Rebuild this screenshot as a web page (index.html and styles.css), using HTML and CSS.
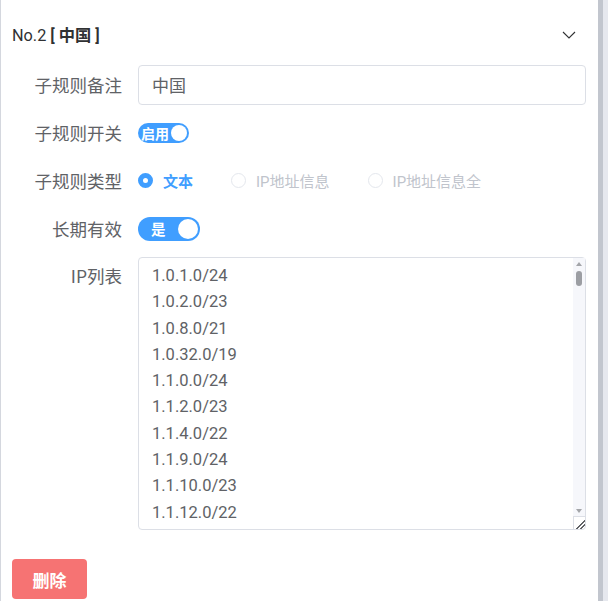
FILE: index.html
```html
<!DOCTYPE html>
<html lang="zh">
<head>
<meta charset="utf-8">
<link rel="stylesheet" href="styles.css">
</head>
<body>
<div class="page">
  <div class="panel">
    <div class="head">
      <div class="title">No.2 <b>[ 中国 ]</b></div>
      <svg class="chev" width="14" height="8" viewBox="0 0 14 8"><path d="M1 1 L7 7 L13 1" fill="none" stroke="#303133" stroke-width="1.1"/></svg>
    </div>
    <div class="form">
      <div class="row">
        <div class="label">子规则备注</div>
        <div class="ctrl"><div class="input">中国</div></div>
      </div>
      <div class="row">
        <div class="label">子规则开关</div>
        <div class="ctrl"><span class="sw sw-sm"><span class="sw-text">启用</span><span class="knob"></span></span></div>
      </div>
      <div class="row">
        <div class="label">子规则类型</div>
        <div class="ctrl radios">
          <span class="radio on"><span class="dot"></span><span class="rl">文本</span></span>
          <span class="radio"><span class="dot"></span><span class="rl">IP地址信息</span></span>
          <span class="radio"><span class="dot"></span><span class="rl">IP地址信息全</span></span>
        </div>
      </div>
      <div class="row">
        <div class="label">长期有效</div>
        <div class="ctrl"><span class="sw sw-lg"><span class="sw-text">是</span><span class="knob"></span></span></div>
      </div>
      <div class="row row-ta">
        <div class="label">IP列表</div>
        <div class="ctrl">
          <div class="ta-wrap">
<textarea class="ta" spellcheck="false">1.0.1.0/24
1.0.2.0/23
1.0.8.0/21
1.0.32.0/19
1.1.0.0/24
1.1.2.0/23
1.1.4.0/22
1.1.9.0/24
1.1.10.0/23
1.1.12.0/22
1.1.16.0/20
1.1.32.0/19
1.2.0.0/23
1.2.2.0/24
1.2.4.0/24
1.2.5.0/24
1.2.6.0/23
1.2.8.0/24
1.2.9.0/24
1.2.10.0/23
1.2.12.0/22
1.2.16.0/20
1.2.32.0/19
1.2.64.0/18
1.3.0.0/16
1.4.1.0/24
1.4.2.0/23
1.4.4.0/24
1.4.5.0/24
1.4.6.0/23
1.4.8.0/21
1.4.16.0/20
1.4.32.0/19
1.4.64.0/18
1.8.0.0/16
1.10.0.0/21
1.10.8.0/23
1.10.11.0/24
1.10.12.0/22
1.10.16.0/20
1.10.32.0/19
1.10.64.0/18
1.12.0.0/14
1.24.0.0/13
1.45.0.0/16
1.48.0.0/15
1.50.0.0/16
1.51.0.0/16
1.56.0.0/13
1.68.0.0/14
1.80.0.0/13
1.88.0.0/14
1.92.0.0/15
1.94.0.0/15
1.180.0.0/14
1.184.0.0/15
1.188.0.0/14
1.192.0.0/13
1.202.0.0/15
1.204.0.0/14
14.0.0.0/21
14.0.12.0/22
14.1.0.0/22
14.1.24.0/22
14.1.96.0/22
14.1.108.0/22
14.16.0.0/12
14.102.128.0/22
14.102.156.0/22
14.102.180.0/22
14.103.0.0/16
14.104.0.0/13
14.112.0.0/12
14.130.0.0/15
14.134.0.0/15
14.144.0.0/12
14.192.60.0/22
14.192.76.0/22
14.196.0.0/15
14.204.0.0/15
14.208.0.0/12
27.0.128.0/22
27.0.132.0/22
27.0.160.0/22
27.0.188.0/22
27.0.204.0/22
27.0.208.0/21
27.8.0.0/13
27.16.0.0/12
27.34.232.0/21
27.36.0.0/14
27.40.0.0/13
27.50.40.0/21
27.50.128.0/17
27.54.72.0/21
27.54.152.0/21
27.54.192.0/18
27.98.208.0/20
27.98.224.0/19
27.99.128.0/17
27.103.0.0/16
27.106.128.0/18
27.106.204.0/22
27.109.32.0/19
27.112.0.0/18
27.112.80.0/20
27.113.128.0/18
27.115.0.0/17
27.116.44.0/22
27.121.72.0/21
27.121.120.0/21
27.128.0.0/15
27.131.220.0/22
27.144.0.0/16
27.148.0.0/14
27.152.0.0/13
27.184.0.0/13
27.192.0.0/11
27.224.0.0/14
36.0.0.0/22
36.0.8.0/21
36.0.16.0/20
36.0.32.0/19
36.0.64.0/18
36.0.128.0/17
36.1.0.0/16
36.4.0.0/14
36.16.0.0/12
36.32.0.0/14
36.36.0.0/16
36.37.0.0/19
36.37.36.0/23
36.37.39.0/24
36.37.40.0/21
36.37.48.0/20
36.40.0.0/13
36.48.0.0/15
36.51.0.0/16
36.56.0.0/13
36.96.0.0/11
36.128.0.0/10
36.192.0.0/11
36.248.0.0/14</textarea>
            <div class="sb" aria-hidden="true">
              <span class="sb-up"></span>
              <span class="sb-thumb"></span>
              <span class="sb-down"></span>
            </div>
            <div class="grip" aria-hidden="true"></div>
          </div>
        </div>
      </div>
      <div class="actions"><span class="btn-del">删除</span></div>
    </div>
  </div>
  <div class="strip-dark"></div>
  <div class="strip-light"></div>
</div>
</body>
</html>
```
FILE: styles.css
```css
html, body {
  margin: 0;
  padding: 0;
  background: #fff;
}
body {
  font-family: Roboto, "Noto Sans CJK SC", sans-serif;
  color: #606266;
}
.page {
  display: flex;
  width: 608px;
  height: 601px;
  overflow: hidden;
}
.panel {
  flex: 1;
  border-left: 1px solid #d4d7de;
  display: flex;
  flex-direction: column;
  min-width: 0;
}
.strip-dark {
  width: 5px;
  background: #c2c6ce;
}
.strip-light {
  width: 5px;
  background: #e6e8ee;
}
.head {
  height: 62px;
  padding-top: 3px;
  padding-left: 11px;
  padding-right: 22px;
  display: flex;
  align-items: center;
  justify-content: space-between;
}
.title {
  font-size: 16.25px;
  color: #303133;
}
.title b {
  font-weight: 600;
}
.chev {
  display: block;
  margin-top: 2px;
}
.form {
  display: flex;
  flex-direction: column;
  gap: 8px;
  padding-right: 12px;
}
.row {
  display: grid;
  grid-template-columns: 121px 1fr;
  column-gap: 16px;
  min-height: 40px;
}
.label {
  text-align: right;
  font-size: 17.5px;
  line-height: 40px;
  height: 40px;
  color: #606266;
  font-family: "Noto Sans CJK SC", Roboto, sans-serif;
  white-space: nowrap;
}
.row-ta .label {
  line-height: 38px;
}
.ctrl {
  box-sizing: border-box;
  display: flex;
  align-items: center;
  min-height: 40px;
}
.input {
  box-sizing: border-box;
  width: 100%;
  height: 40px;
  border: 1px solid #dcdfe6;
  border-radius: 4px;
  padding: 0 13px;
  line-height: 38px;
  font-size: 17px;
  color: #606266;
  font-family: "Noto Sans CJK SC", Roboto, sans-serif;
}
.sw {
  position: relative;
  display: inline-flex;
  align-items: center;
  background: #409eff;
  border-radius: 12px;
  color: #fff;
  font-family: "Noto Sans CJK SC", sans-serif;
  font-weight: 700;
  box-sizing: border-box;
}
.sw-sm {
  width: 51px;
  height: 20px;
  font-size: 14px;
  padding-left: 3px;
}
.sw-sm .knob {
  position: absolute;
  right: 2px;
  top: 2px;
  width: 16px;
  height: 16px;
}
.sw-lg {
  width: 62px;
  height: 24px;
  font-size: 14.5px;
  padding-left: 13px;
}
.sw-lg .knob {
  position: absolute;
  right: 2px;
  top: 2px;
  width: 20px;
  height: 20px;
}
.knob {
  background: #fff;
  border-radius: 50%;
}
.sw-text {
  line-height: 1;
}
.radios {
  padding-bottom: 2px;
}
.radio {
  display: inline-flex;
  align-items: center;
  font-size: 15px;
  color: #c0c4cc;
  font-family: Roboto, "Noto Sans CJK SC", sans-serif;
}
.radio + .radio {
  margin-left: 38px;
}
.dot {
  box-sizing: border-box;
  width: 15px;
  height: 15px;
  border-radius: 50%;
  border: 1px solid #e4e7ed;
  background: #fff;
  margin-right: 10px;
}
.radio.on .dot {
  border: 5px solid #409eff;
}
.radio.on .rl {
  color: #409eff;
  font-weight: 700;
  font-family: "Noto Sans CJK SC", sans-serif;
}
.row-ta .ctrl {
  align-items: flex-start;
}
.ta-wrap {
  position: relative;
  width: 100%;
}
.ta {
  display: block;
  box-sizing: border-box;
  width: 100%;
  height: 273px;
  margin: 0;
  border: 1px solid #dcdfe6;
  border-radius: 4px;
  padding: 5px 26px 4px 13px;
  font-family: Roboto, "Noto Sans CJK SC", sans-serif;
  font-size: 16.5px;
  line-height: 26.3px;
  color: #606266;
  resize: none;
  outline: none;
  overflow: hidden;
}
.sb {
  position: absolute;
  top: 1px;
  right: 1px;
  bottom: 14px;
  width: 12px;
  background: #f6f7fb;
}
.sb-up, .sb-down {
  position: absolute;
  left: 3px;
  width: 0;
  height: 0;
  border-left: 3px solid transparent;
  border-right: 3px solid transparent;
}
.sb-up {
  top: 4px;
  border-bottom: 4px solid #a3a5a9;
}
.sb-down {
  bottom: 3px;
  border-top: 4px solid #a3a5a9;
}
.sb-thumb {
  position: absolute;
  top: 13px;
  left: 3px;
  width: 6px;
  height: 15px;
  border-radius: 3px;
  background: #9c9ea3;
}
.grip {
  position: absolute;
  right: 1px;
  bottom: 1px;
  width: 12px;
  height: 13px;
  box-sizing: border-box;
  border-left: 1px solid #dcdfe6;
  border-top: 1px solid #dcdfe6;
  border-bottom-right-radius: 3px;
  background:
    linear-gradient(135deg, transparent 58%, #606266 58%, #606266 66%, transparent 66%, transparent 76%, #606266 76%, #606266 84%, transparent 84%);
}
.actions {
  padding-left: 11px;
  padding-top: 21px;
}
.btn-del {
  display: inline-flex;
  align-items: center;
  justify-content: center;
  width: 75px;
  height: 40px;
  background: #f67373;
  border-radius: 4px;
  color: #fff;
  font-size: 17px;
  font-weight: 700;
  font-family: "Noto Sans CJK SC", sans-serif;
}
```
